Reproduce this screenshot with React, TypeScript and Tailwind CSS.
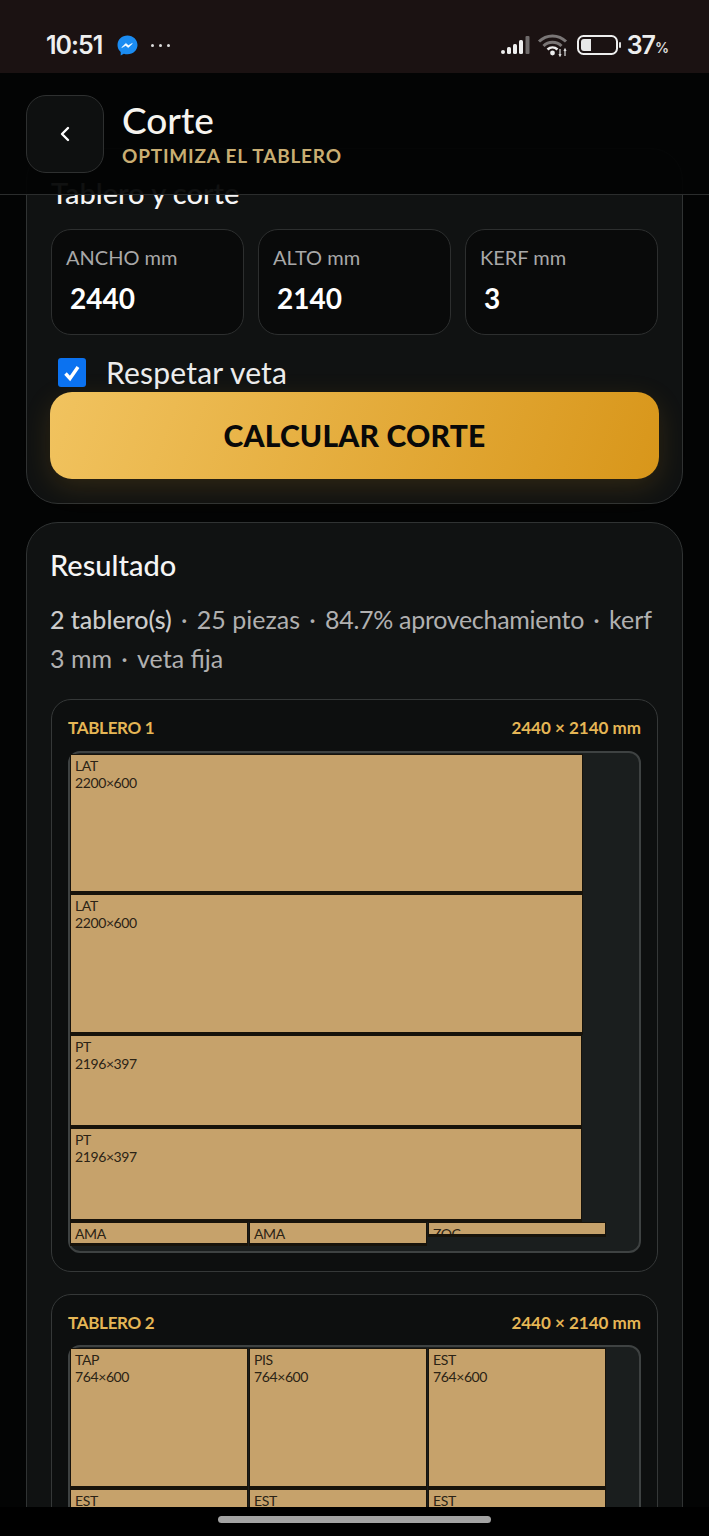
import { ChevronLeft } from "lucide-react";

const FONT = "font-['Lato','Noto_Sans',sans-serif]";

type Piece = { label: string; size?: string; w: string; h: string };

const PieceBox = ({ label, size, w, h }: Piece) => (
  <div className={`${w} ${h} shrink-0 overflow-hidden bg-[#c6a26b] px-1 pt-[2px] text-[14px] leading-[17px] tracking-[-0.4px] text-[#2b2315] shadow-[0_0_0_1px_#17130b,0_2px_0_1px_#17130b]`}>
    <div>{label}</div>
    {size && <div>{size}</div>}
  </div>
);

const Field = ({ label, value }: { label: string; value: string }) => (
  <div className="flex h-[106px] flex-col rounded-[20px] border border-[#2d2f2f] bg-[#090a0a] pl-[14px] pt-[13px]">
    <span className="text-[20px] leading-[28px] text-[#a8a8a8]">{label}</span>
    <span className="mt-[12px] pl-[4px] text-[28px] font-bold leading-[30px] text-white">{value}</span>
  </div>
);

const BoardHead = ({ title }: { title: string }) => (
  <div className="flex items-center justify-between text-[17px] font-bold leading-[20px] text-[#e5b655]">
    <span className="tracking-[-0.3px]">{title}</span>
    <span>2440 × 2140 mm</span>
  </div>
);

const Sep = () => <span className="inline-block w-[25px] text-center">·</span>;

export default function App() {
  return (
    <div className={`${FONT} flex h-[1536px] w-[709px] flex-col overflow-hidden bg-[#030404]`}>
      {/* status bar */}
      <div className="flex h-[73px] shrink-0 items-center justify-between bg-[#1b1212] pl-[46px] pr-[40px] pt-[17px]">
        <div className="flex items-center">
          <span className="font-['Inter',sans-serif] text-[25px] font-semibold leading-none tracking-[-1px] text-[#eeeeee]">10:51</span>
          <svg className="ml-[15px]" width="21" height="21" viewBox="0 0 21 21">
            <path d="M10.5 .5C4.8 .5.5 4.6.5 10c0 2.9 1.2 5.3 3.2 7v3.5l3.2-1.8c1.1.4 2.3.6 3.6.6 5.7 0 10-4.2 10-9.3S16.2.5 10.5.5z" fill="#1b8cf2" />
            <path d="M4.8 12.6l4-4.2 2.6 2.2 3.9-2.2-4 4.2-2.6-2.2z" fill="#fff" stroke="#fff" strokeWidth=".6" />
          </svg>
          <div className="ml-[13px] flex gap-[5px]">
            <i className="h-[3px] w-[3px] rounded-full bg-[#dddddd]" />
            <i className="h-[3px] w-[3px] rounded-full bg-[#dddddd]" />
            <i className="h-[3px] w-[3px] rounded-full bg-[#dddddd]" />
          </div>
        </div>
        <div className="flex items-center">
          <svg width="30" height="20" viewBox="0 0 30 20">
            <rect x="1" y="15" width="4" height="4" rx="2" fill="#eee" />
            <rect x="7" y="12" width="4" height="7" rx="1.5" fill="#eee" />
            <rect x="13" y="9" width="4" height="10" rx="1.5" fill="#eee" />
            <rect x="19" y="5" width="4" height="14" rx="1.5" fill="#eee" />
            <rect x="25.5" y="1" width="4" height="18" rx="1" fill="#6f6b6b" />
          </svg>
          <svg className="ml-[7px]" width="32" height="24" viewBox="0 0 32 24" fill="none">
            <path d="M2 8.5C9.5 1 21.5 1 29 8.5" stroke="#7a7676" strokeWidth="3" />
            <path d="M6.5 13C11.5 8 19.5 8 24.5 13" stroke="#7a7676" strokeWidth="3" />
            <path d="M10.5 16.5C13.5 13.8 17.5 13.8 20.5 16.5" stroke="#eee" strokeWidth="2.6" />
            <circle cx="15.5" cy="20" r="2.4" fill="#eee" />
            <path d="M23 16v7M22 21l1 2 1-2M28 16v7M27 18l1-2 1 2" stroke="#ddd" strokeWidth="1.2" />
          </svg>
          <svg className="ml-[8px]" width="44" height="20" viewBox="0 0 44 20" fill="none">
            <rect x="1" y="1" width="39" height="18" rx="5.5" stroke="#eee" strokeWidth="2" />
            <path d="M7 4h7v12H7a3 3 0 0 1-3-3V7a3 3 0 0 1 3-3z" fill="#e8e8e8" />
            <rect x="42" y="7" width="2" height="6" rx="1" fill="#ddd" />
          </svg>
          <span className="ml-[6px] font-['Inter',sans-serif] text-[25px] font-semibold leading-none tracking-[-1px] text-[#eeeeee]">37</span>
          <span className="mt-[6px] font-['Inter',sans-serif] text-[14px] font-semibold leading-none text-[#dddddd]">%</span>
        </div>
      </div>

      <main className="relative min-h-0 flex-1 overflow-hidden">
        <header className="absolute inset-x-0 top-0 z-10 flex h-[122px] items-start border-b border-[#2b2d2d] bg-[#030404]/95 pl-[26px] pt-[22px]">
          <div className="flex h-[78px] w-[78px] items-center justify-center rounded-[20px] border border-[#2e3030] bg-[#0e1010]">
            <ChevronLeft size={24} strokeWidth={2.4} className="text-white" />
          </div>
          <div className="ml-[18px]">
            <div className="mt-[3px] text-[37px] font-medium leading-[44px] text-[#f6f4ef]">Corte</div>
            <div className="mt-[2px] text-[19px] font-bold leading-[24px] tracking-[0.8px] text-[#c9ae72]">OPTIMIZA EL TABLERO</div>
          </div>
        </header>

        <div className="mt-[75px] flex flex-col gap-[18px] px-[26px]">
          <section className="relative h-[356px] rounded-[32px] border border-[#303333] bg-[#101212] px-[24px] pt-[26px]">
            <h2 className="text-[29px] font-medium leading-[36px] text-[#f5f5f5]">Tablero y corte</h2>
            <div className="mt-[18px] grid grid-cols-3 gap-[14px]">
              <Field label="ANCHO mm" value="2440" />
              <Field label="ALTO mm" value="2140" />
              <Field label="KERF mm" value="3" />
            </div>
            <div className="mt-[23px] flex h-[29px] items-center pl-[7px]">
              <div className="flex h-[29px] w-[28px] items-center justify-center rounded-[3px] bg-[#0b72f0]">
                <svg width="20" height="20" viewBox="0 0 20 20" fill="none">
                  <path d="M3.5 10.5l4.5 5L16 4" stroke="#fff" strokeWidth="3.4" />
                </svg>
              </div>
              <span className="ml-[20px] pb-[2px] text-[30px] leading-[36px] tracking-[0.2px] text-[#ececec]">Respetar veta</span>
            </div>
            <button className="-mx-px mt-[5px] flex h-[87px] w-[calc(100%+2px)] items-center justify-center rounded-[22px] bg-[linear-gradient(110deg,#f1c35f,#d8961a)] text-[30px] font-black tracking-[0.2px] text-[#090909] shadow-[0_8px_28px_rgba(216,150,26,0.16)]">
              CALCULAR CORTE
            </button>
          </section>

          <section className="rounded-[32px] border border-[#303333] bg-[#101212] px-[24px] pt-[24px]">
            <h2 className="-ml-px text-[29px] font-medium leading-[36px] text-[#f5f5f5]">Resultado</h2>
            <p className="-ml-px mt-[17px] text-[25px] leading-[39px] text-[#b0b0b0]">
              <span className="font-medium text-[#cccccc]">2 tablero(s)</span>
              <Sep />25 piezas<Sep />
              <span className="tracking-[-0.3px]">84.7% aprovechamiento</span>
              <Sep />kerf 3 mm<Sep />veta fija
            </p>
            <div className="mt-[21px] flex flex-col gap-[22px]">
              <div className="h-[573px] rounded-[20px] border border-[#353838] bg-[#0d0f0f] px-[16px] pt-[18px]">
                <BoardHead title="TABLERO 1" />
                <div className="mt-[13px] flex h-[502px] flex-col gap-[4px] rounded-[12px] border-2 border-[#3e4242] bg-[#1a1e1e] pl-px pt-[2px]">
                  <PieceBox label="LAT" size="2200×600" w="w-[511px]" h="h-[136px]" />
                  <PieceBox label="LAT" size="2200×600" w="w-[511px]" h="h-[137px]" />
                  <PieceBox label="PT" size="2196×397" w="w-[510px]" h="h-[89px]" />
                  <PieceBox label="PT" size="2196×397" w="w-[510px]" h="h-[90px]" />
                  <div className="flex items-start gap-[3px]">
                    <PieceBox label="AMA" w="w-[176px]" h="h-[20px]" />
                    <PieceBox label="AMA" w="w-[176px]" h="h-[20px]" />
                    <PieceBox label="ZOC" w="w-[176px]" h="h-[11px]" />
                  </div>
                </div>
              </div>
              <div className="h-[300px] rounded-[20px] border border-[#353838] bg-[#0d0f0f] px-[16px] pt-[18px]">
                <BoardHead title="TABLERO 2" />
                <div className="mt-[12px] flex h-[260px] flex-col gap-[4px] rounded-[12px] border-2 border-[#3e4242] bg-[#1a1e1e] pl-px pt-[2px]">
                  <div className="flex gap-[3px]">
                    <PieceBox label="TAP" size="764×600" w="w-[176px]" h="h-[137px]" />
                    <PieceBox label="PIS" size="764×600" w="w-[176px]" h="h-[137px]" />
                    <PieceBox label="EST" size="764×600" w="w-[176px]" h="h-[137px]" />
                  </div>
                  <div className="flex gap-[3px]">
                    <PieceBox label="EST" size="764×600" w="w-[176px]" h="h-[100px]" />
                    <PieceBox label="EST" size="764×600" w="w-[176px]" h="h-[100px]" />
                    <PieceBox label="EST" size="764×600" w="w-[176px]" h="h-[100px]" />
                  </div>
                </div>
              </div>
            </div>
          </section>
        </div>
      </main>

      {/* gesture bar */}
      <div className="flex h-[29px] shrink-0 items-start justify-center bg-black pt-[9px]">
        <div className="h-[7px] w-[273px] rounded-full bg-[#a3a3a3]" />
      </div>
    </div>
  );
}
